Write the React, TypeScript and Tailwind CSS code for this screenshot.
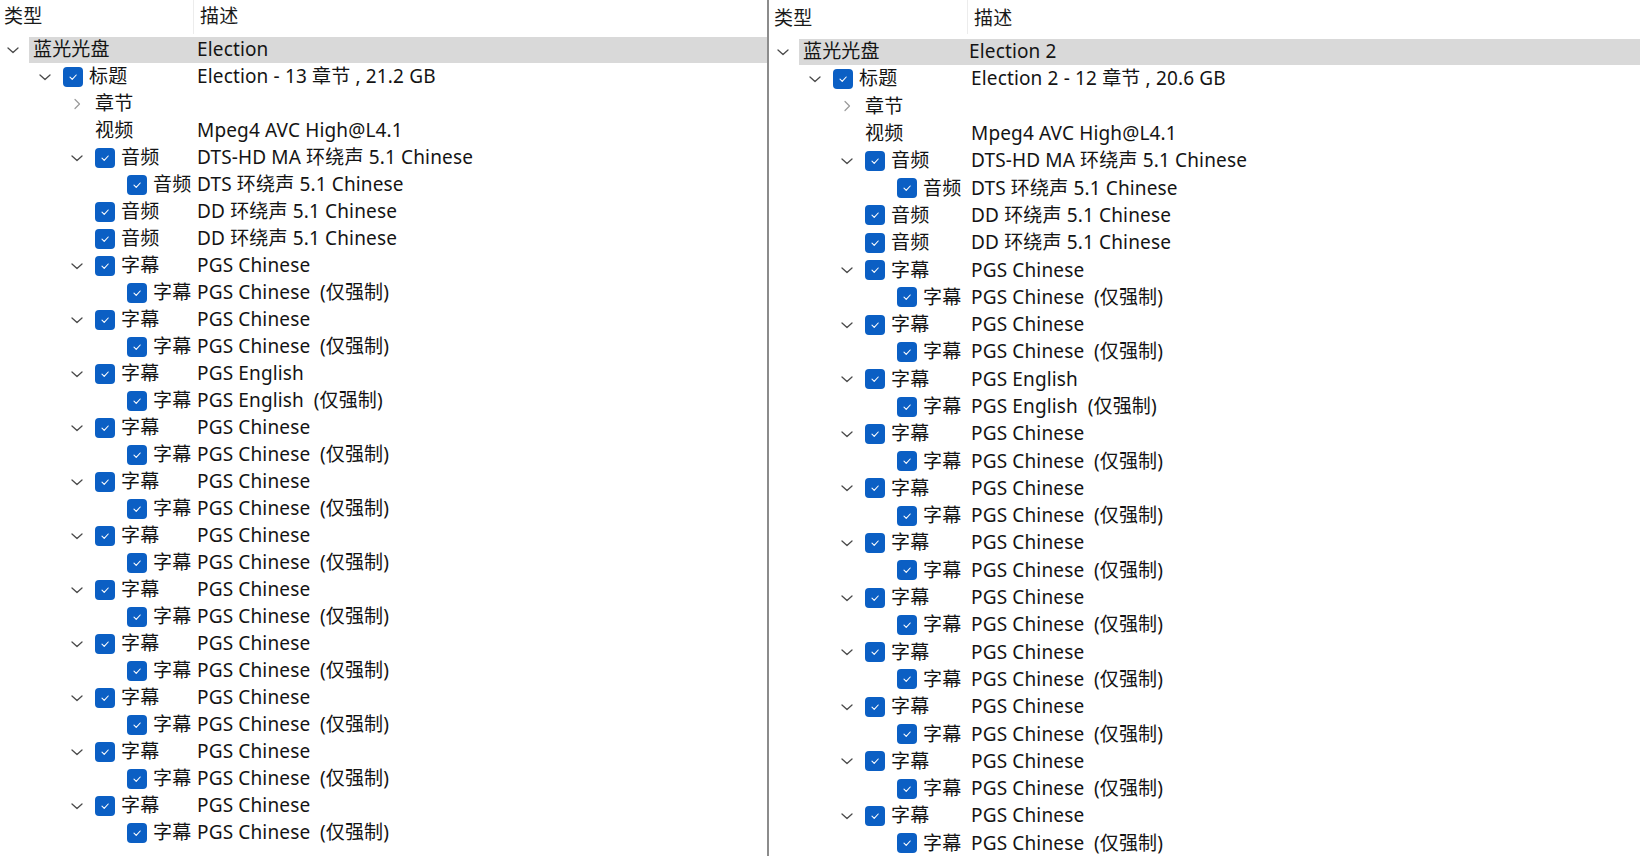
type Node = {
  level: number
  chevron?: 'down' | 'right'
  check?: boolean
  label: string
  desc?: string
  highlight?: boolean
}

function buildTree(name: string, summary: string): Node[] {
  const rows: Node[] = [
    { level: 0, chevron: 'down', label: '蓝光光盘', desc: name, highlight: true },
    { level: 1, chevron: 'down', check: true, label: '标题', desc: summary },
    { level: 2, chevron: 'right', label: '章节' },
    { level: 2, label: '视频', desc: 'Mpeg4 AVC High@L4.1' },
    { level: 2, chevron: 'down', check: true, label: '音频', desc: 'DTS-HD MA 环绕声 5.1 Chinese' },
    { level: 3, check: true, label: '音频', desc: 'DTS 环绕声 5.1 Chinese' },
    { level: 2, check: true, label: '音频', desc: 'DD 环绕声 5.1 Chinese' },
    { level: 2, check: true, label: '音频', desc: 'DD 环绕声 5.1 Chinese' },
  ]
  for (let i = 0; i < 11; i++) {
    const lang = i === 2 ? 'English' : 'Chinese'
    rows.push({ level: 2, chevron: 'down', check: true, label: '字幕', desc: `PGS ${lang}` })
    rows.push({ level: 3, check: true, label: '字幕', desc: `PGS ${lang}\u2002(仅强制)` })
  }
  return rows
}

const indent = ['pl-[5px]', 'pl-[37px]', 'pl-[69px]', 'pl-[101px]']

function Chevron({ dir }: { dir: 'down' | 'right' }) {
  if (dir === 'right') {
    return (
      <svg width="16" height="16" viewBox="0 0 16 16" fill="none">
        <path d="M6 3.5 L10.5 8 L6 12.5" stroke="#9a9a9a" strokeWidth="1.2" strokeLinecap="round" strokeLinejoin="round" />
      </svg>
    )
  }
  return (
    <svg width="16" height="16" viewBox="0 0 16 16" fill="none">
      <path d="M3 6 L8 10.5 L13 6" stroke="#4a4a4a" strokeWidth="1.3" strokeLinecap="round" strokeLinejoin="round" />
    </svg>
  )
}

function Checkbox() {
  return (
    <div className="w-[20px] h-[20px] shrink-0 rounded-[4px] bg-[#0b5fc4] flex items-center justify-center">
      <svg width="12" height="12" viewBox="0 0 12 12" fill="none">
        <path d="M3 6.2 L5.2 8.3 L9.2 4" stroke="white" strokeWidth="1.1" strokeLinecap="round" strokeLinejoin="round" />
      </svg>
    </div>
  )
}

interface PanelProps {
  rows: Node[]
  headerH: string
  headerPt: string
  rowH: string
  typeW: string
  sepX: string
  hlLabelW: string
}

function TreePanel({ rows, headerH, headerPt, rowH, typeW, sepX, hlLabelW }: PanelProps) {
  return (
    <div className="flex flex-col">
      {/* column header */}
      <div className={`flex ${headerH} text-[#1a1a1a]`}>
        <div className={`${sepX} shrink-0 pl-[4px] ${headerPt}`}>类型</div>
        <div className="w-px h-[34px] bg-[#ececec]" />
        <div className={`pl-[6px] ${headerPt}`}>描述</div>
      </div>

      {rows.map((r, i) =>
        r.highlight ? (
          <div key={i} className={`flex items-center ${rowH}`}>
            <div className="pl-[5px] w-[21px] shrink-0 flex">
              <Chevron dir="down" />
            </div>
            <div className="flex-1 ml-[8px] h-[26px] bg-[#d9d9d9] flex items-center pl-[4px]">
              <span className={`${hlLabelW} shrink-0`}>{r.label}</span>
              <span>{r.desc}</span>
            </div>
          </div>
        ) : (
          <div key={i} className={`flex items-center ${rowH}`}>
            <div className={`${typeW} shrink-0 flex items-center ${indent[r.level]}`}>
              <div className="w-[16px] h-[16px] shrink-0 flex">
                {r.chevron && <Chevron dir={r.chevron} />}
              </div>
              <div className="ml-[10px] flex items-center gap-[6px] whitespace-nowrap">
                {r.check && <Checkbox />}
                <span>{r.label}</span>
              </div>
            </div>
            <span className="whitespace-pre">{r.desc}</span>
          </div>
        )
      )}
    </div>
  )
}

export default function App() {
  return (
    <div
      className="w-[1640px] h-[856px] overflow-hidden bg-white text-[#141414] text-[19px] tracking-[0.15px] leading-none flex"
      style={{ fontFamily: '"Noto Sans", "Noto Sans CJK SC", sans-serif' }}
    >
      <div className="w-[767px] shrink-0">
        <TreePanel
          rows={buildTree('Election', 'Election - 13 章节 , 21.2 GB')}
          headerH="h-[36px]"
          headerPt="pt-[7px]"
          rowH="h-[27px]"
          typeW="w-[197px]"
          sepX="w-[193px]"
          hlLabelW="w-[164px]"
        />
      </div>
      <div className="w-[2px] shrink-0 bg-[#8c8c8c]" />
      <div className="flex-1 pl-[1px]">
        <TreePanel
          rows={buildTree('Election 2', 'Election 2 - 12 章节 , 20.6 GB')}
          headerH="h-[38px]"
          headerPt="pt-[9px]"
          rowH="h-[27.3px]"
          typeW="w-[201px]"
          sepX="w-[197px]"
          hlLabelW="w-[166px]"
        />
      </div>
    </div>
  )
}
